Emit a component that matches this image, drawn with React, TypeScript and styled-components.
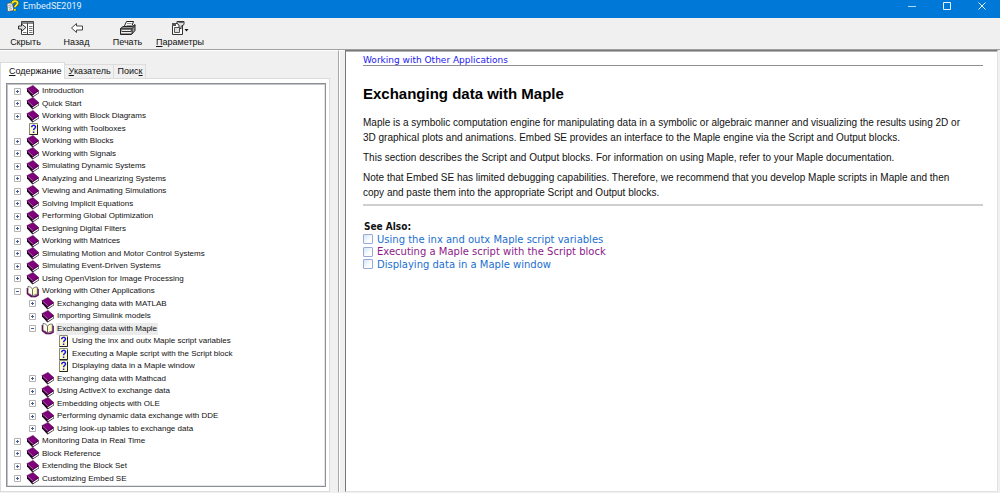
import React, { useState } from "react";
import styled, { createGlobalStyle } from "styled-components";

const GlobalStyle = createGlobalStyle`
  *, *::before, *::after { box-sizing: border-box; }
  body {
    margin: 0;
    background: #f0f0f0;
    color: #111;
    font-family: "Liberation Sans", Arial, sans-serif;
  }
  button { font: inherit; color: inherit; background: none; border: 0; padding: 0; }
  ul, h1, h2, p { margin: 0; padding: 0; }
  svg { display: block; }
`;

const Window = styled.div`
  display: flex;
  flex-direction: column;
  min-height: 100vh;
`;

const TitleBar = styled.header`
  display: flex;
  align-items: center;
  height: 18px;
  padding: 0 8px 6px 6px;
  background: #0078d7;
  color: #e6f2fc;
`;

const Title = styled.h1`
  flex: 1;
  margin-left: 4px;
  font: 400 9px/12px Roboto, sans-serif;
`;

const WindowControls = styled.div`
  display: flex;
  gap: 15px;
`;

const WindowButton = styled.button`
  display: flex;
  align-items: center;
  justify-content: center;
  width: 20px;
  height: 12px;
`;

const Toolbar = styled.div`
  display: flex;
  height: 32px;
  padding-top: 2px;
  border-bottom: 1px solid #a0a0a0;
  background: #f0f0f0;
`;

const ToolButton = styled.button<{ $wide?: boolean }>`
  display: flex;
  flex-direction: column;
  align-items: center;
  width: ${(p) => (p.$wide ? 54 : 51)}px;
  font-size: 9px;
  line-height: 11px;

  svg { margin-bottom: 1px; }
`;

const Workspace = styled.div`
  display: flex;
  flex: 1;
  padding: 0 2px 2px 0;
`;

const Sidebar = styled.aside`
  display: flex;
  flex-direction: column;
  flex: 0 0 339px;
  padding: 11px 8px 0 0;
  border-top: 1px solid #fff;
  border-right: 1px solid #a8a8a8;
`;

const TabList = styled.div`
  display: flex;
  align-items: flex-end;
  height: 16px;
`;

const Tab = styled.button<{ $active?: boolean }>`
  position: relative;
  height: ${(p) => (p.$active ? 17 : 14)}px;
  margin-bottom: ${(p) => (p.$active ? -1 : 0)}px;
  padding: 0 2px 1px ${(p) => (p.$active ? 8 : 4)}px;
  border: 1px solid #dcdcdc;
  border-bottom: 0;
  border-left-width: ${(p) => (p.$active ? 1 : 0)}px;
  background: ${(p) => (p.$active ? "#fff" : "#f0f0f0")};
  font-size: 9px;
  line-height: 12px;
  white-space: nowrap;
`;

const TabPanel = styled.div`
  display: flex;
  flex: 1;
  padding: 4px 3px 4px 5px;
  border: 1px solid #dcdcdc;
  background: #fff;
`;

const Tree = styled.ul`
  flex: 1;
  padding: 1px 6px;
  border: 1px solid #8b8f98;
  box-shadow: inset 1px 1px 0 #c4c4c4, inset -1px -1px 0 #e4e4e4;
  list-style: none;
`;

const TreeRow = styled.li<{ $depth: number }>`
  display: flex;
  align-items: center;
  height: 12px;
  padding-left: ${(p) => p.$depth * 15}px;

  &:nth-child(even) { height: 13px; }
`;

const Expander = styled.button`
  width: 9px;
  height: 9px;
  margin-right: 4px;
`;

const ExpanderSpace = styled.span`
  width: 13px;
`;

const TopicButton = styled.button<{ $selected?: boolean }>`
  height: 12px;
  margin-left: 1px;
  padding: 0 1px;
  background: ${(p) => (p.$selected ? "#ececec" : "transparent")};
  font-size: 8px;
  line-height: 12px;
  white-space: nowrap;
`;

const Splitter = styled.div`
  flex: 0 0 6px;
  border-top: 1px solid #fff;
  border-left: 1px solid #fff;
`;

const Page = styled.main`
  flex: 1;
  min-width: 0;
  padding: 3px 14px 12px 17px;
  border: 1px solid #e2e2e2;
  border-top-color: #777;
  border-left: 1px solid #777;
  box-shadow: inset 0 1px 0 #b4b4b4;
  background: #fff;
`;

const Breadcrumb = styled.nav`
  height: 12px;
  border-bottom: 1px solid #8f8f8f;
  font: 9px/13px "DejaVu Sans", Verdana, sans-serif;

  a { color: #2418f0; text-decoration: none; }
`;

const Heading = styled.h2`
  margin: 19px 0 12px;
  font-size: 15px;
  line-height: 18px;
  color: #000;
`;

const Article = styled.div`
  display: flex;
  flex-direction: column;
  gap: 5px;
  padding-right: 16px;
`;

const Paragraph = styled.p`
  font-size: 10px;
  line-height: 15px;
`;

const Rule = styled.hr`
  height: 2px;
  margin: 4px 0 14px;
  border: 0;
  background: #cfcfcf;
`;

const SeeAlso = styled.section`
  font: 10px/13px "DejaVu Sans", Verdana, sans-serif;
`;

const SeeAlsoTitle = styled.p`
  padding-left: 1px;
  font: 700 10px/13px "DejaVu Sans Condensed", Tahoma, sans-serif;
`;

const RelatedRow = styled.div`
  display: flex;
  align-items: center;
  gap: 4px;
  height: 12px;

  &:nth-of-type(even) { height: 13px; }
`;

const RelatedBox = styled.input`
  appearance: none;
  width: 10px;
  height: 10px;
  margin: 0;
  border: 1px solid #9aa9d6;
  border-radius: 1px;
  background: linear-gradient(135deg, #d3e6fa, #fff 70%);
`;

const RelatedLink = styled.a<{ $visited?: boolean }>`
  color: ${(p) => (p.$visited ? "#8b1a8b" : "#1a6fd0")};
  text-decoration: none;
`;

const AppIcon = () => (
  <svg width="13" height="12" viewBox="0 0 13 12" aria-hidden="true">
    <path d="M1 3.5 6 2.5 8 10.5 1.5 11.5z" fill="#f4f4ec" stroke="#4a5560" strokeWidth=".7" />
    <path d="M2.5 5.5l3-.5M2.5 7.3l3-.5M3 9.2l3-.5" stroke="#6c7780" strokeWidth=".7" />
    <path d="M6.3 3.6C6.2.8 11.6.4 11.6 3.2 11.6 5 9 5 9 7.2M8.8 9v1.8" fill="none" stroke="#3b3a10" strokeWidth="3" />
    <path d="M6.3 3.6C6.2.8 11.6.4 11.6 3.2 11.6 5 9 5 9 7.2M8.8 9v1.8" fill="none" stroke="#ffe81a" strokeWidth="2" />
  </svg>
);

const HideIcon = () => (
  <svg width="16" height="16" viewBox="0 0 16 16" aria-hidden="true">
    <path d="M3.500 1.500h12v13h-12z" fill="#fff" stroke="#444" />
    <path d="M4 2h11v2H4z" fill="#888" />
    <path d="M9.500 3v11" stroke="#444" />
    <path d="M11 6.500h3.500M11 8.500h3.500M11 10.500h3.500M11 12.500h3.500M5 12.500h3.500" stroke="#777" />
    <path d="M.5 6v3h3v2.300L8 7.500 3.500 4V6z" fill="#ddd" stroke="#222" strokeWidth=".9" />
  </svg>
);

const BackIcon = () => (
  <svg width="16" height="16" viewBox="0 0 16 16" aria-hidden="true">
    <path d="M2.500 8 7.500 3.500v2.500h6v4h-6v2.500z" fill="#fff" stroke="#333" strokeWidth=".9" />
  </svg>
);

const PrintIcon = () => (
  <svg width="18" height="16" viewBox="0 0 18 16" aria-hidden="true">
    <path d="M5 7 7.500 1.500h7L12.500 7z" fill="#fff" stroke="#222" />
    <path d="M8 3.500h4.500M7.500 5.500H12" stroke="#777" strokeWidth=".8" />
    <path d="M1.500 8.500 4 6.500h9.500l2.500-2v6l-3.500 4h-11z" fill="#999" stroke="#222" />
    <path d="M1.500 8.800h11.500l3-3.500M13 9v5" fill="none" stroke="#222" />
    <path d="M3 10.500h8.500M2 12.500h10.500" stroke="#eee" />
    <path d="M3 11.500h9" stroke="#333" />
  </svg>
);

const OptionsIcon = () => (
  <svg width="18" height="16" viewBox="0 0 18 16" aria-hidden="true">
    <path d="M1.500 3.500h10v11h-10z" fill="#fff" stroke="#333" />
    <path d="M1 3h4v3H1z" fill="#555" />
    <path d="M3.500 7.500h5v5h-5z" fill="#ddd" stroke="#555" />
    <path d="M6 1.500h7v3L10 6.500V9L8 7.500V5L6 3.500z" fill="#ddd" stroke="#222" strokeWidth=".9" />
    <path d="M7.500 2.500h5" stroke="#666" />
    <path d="M13.500 9h4l-2 2.500z" fill="#111" />
  </svg>
);

const ClosedBook = () => (
  <svg width="14" height="13" viewBox="0 0 14 13" aria-hidden="true">
    <path d="M1 4v2.500l5.500 6 6.500-4.300-.6-2.700L7 2z" fill="#1a0a1a" />
    <path d="M6.600 10.200 12.200 6.500l.2 1.500-5.600 3.600z" fill="#fff" />
    <path d="M.8 3.700 7 .4l5.800 5.200-6.300 4.200z" fill="#80007c" stroke="#3c003c" strokeWidth=".5" />
    <path d="M2 4.500l4.800 4.300" stroke="#c58ac5" strokeWidth=".7" />
  </svg>
);

const OpenBook = () => (
  <svg width="14" height="13" viewBox="0 0 14 13" aria-hidden="true">
    <path d="M1 3v6l4 3h4.500l3-1.500V4l-1-.5v6.500L7 11.500z" fill="#7b0078" stroke="#4a0048" strokeWidth=".6" />
    <path d="M2 1.500c2 0 4 1 4.500 3v7C5.500 9.500 4 9 2 8.500z" fill="#fffff0" stroke="#444" strokeWidth=".7" />
    <path d="M6.500 4.500C7 3 8.500 2 11.300 2v7.300C9 9.300 7.500 10 6.500 11.500z" fill="#fffbc8" stroke="#444" strokeWidth=".7" />
  </svg>
);

const TopicIcon = () => (
  <svg width="14" height="12" viewBox="0 0 14 12" aria-hidden="true">
    <path d="M3.500.5h8v11h-8z" fill="#fffbc4" stroke="#8a8a7a" />
    <path d="M11.500 2v9.500h-8" fill="none" stroke="#222" />
    <path d="M5.700 4.200c0-2.400 3.800-2.400 3.800-.2 0 1.500-1.900 1.500-1.900 3.200M7.600 8.400V10" fill="none" stroke="#1414e6" strokeWidth="1.500" />
  </svg>
);

const ExpanderIcon = ({ open }: { open?: boolean }) => (
  <svg width="9" height="9" viewBox="0 0 9 9" aria-hidden="true">
    <path d="M1.500 1.500h6v6h-6z" fill="#fff" stroke="#b4b4b4" />
    <path d={open ? "M3 4.500h3" : "M3 4.500h3M4.500 3v3"} stroke="#4a5a92" />
  </svg>
);

type Kind = "book" | "open" | "topic";
const topics: [string, number, Kind][] = [
  ["Introduction", 0, "book"],
  ["Quick Start", 0, "book"],
  ["Working with Block Diagrams", 0, "book"],
  ["Working with Toolboxes", 0, "topic"],
  ["Working with Blocks", 0, "book"],
  ["Working with Signals", 0, "book"],
  ["Simulating Dynamic Systems", 0, "book"],
  ["Analyzing and Linearizing Systems", 0, "book"],
  ["Viewing and Animating Simulations", 0, "book"],
  ["Solving Implicit Equations", 0, "book"],
  ["Performing Global Optimization", 0, "book"],
  ["Designing Digital Filters", 0, "book"],
  ["Working with Matrices", 0, "book"],
  ["Simulating Motion and Motor Control Systems", 0, "book"],
  ["Simulating Event-Driven Systems", 0, "book"],
  ["Using OpenVision for Image Processing", 0, "book"],
  ["Working with Other Applications", 0, "open"],
  ["Exchanging data with MATLAB", 1, "book"],
  ["Importing Simulink models", 1, "book"],
  ["Exchanging data with Maple", 1, "open"],
  ["Using the inx and outx Maple script variables", 2, "topic"],
  ["Executing a Maple script with the Script block", 2, "topic"],
  ["Displaying data in a Maple window", 2, "topic"],
  ["Exchanging data with Mathcad", 1, "book"],
  ["Using ActiveX to exchange data", 1, "book"],
  ["Embedding objects with OLE", 1, "book"],
  ["Performing dynamic data exchange with DDE", 1, "book"],
  ["Using look-up tables to exchange data", 1, "book"],
  ["Monitoring Data in Real Time", 0, "book"],
  ["Block Reference", 0, "book"],
  ["Extending the Block Set", 0, "book"],
  ["Customizing Embed SE", 0, "book"],
];

const icons = { book: ClosedBook, open: OpenBook, topic: TopicIcon };

const related = [
  { id: "variables", text: "Using the inx and outx Maple script variables" },
  { id: "script", text: "Executing a Maple script with the Script block", visited: true },
  { id: "window", text: "Displaying data in a Maple window" },
];

export default function App() {
  const [selected, setSelected] = useState("Exchanging data with Maple");

  return (
    <Window>
      <GlobalStyle />
      <TitleBar>
        <AppIcon />
        <Title>EmbedSE2019</Title>
        <WindowControls>
          <WindowButton aria-label="Minimize">
            <svg width="8" height="8" viewBox="0 0 8 8"><path d="M0 4.500h8" stroke="#b5d8f5" /></svg>
          </WindowButton>
          <WindowButton aria-label="Maximize">
            <svg width="8" height="8" viewBox="0 0 8 8"><path d="M.5.5h7v7h-7z" fill="none" stroke="#e8f3fc" /></svg>
          </WindowButton>
          <WindowButton aria-label="Close">
            <svg width="8" height="8" viewBox="0 0 8 8"><path d="M.5.500l7 7m0-7l-7 7" stroke="#e8f3fc" /></svg>
          </WindowButton>
        </WindowControls>
      </TitleBar>

      <Toolbar role="toolbar">
        <ToolButton><HideIcon /><span>Скрыть</span></ToolButton>
        <ToolButton><BackIcon /><span>Назад</span></ToolButton>
        <ToolButton><PrintIcon /><span>Печать</span></ToolButton>
        <ToolButton $wide><OptionsIcon /><span><u>П</u>араметры</span></ToolButton>
      </Toolbar>

      <Workspace>
        <Sidebar>
          <TabList role="tablist">
            <Tab $active role="tab" aria-selected="true"><u>С</u>одержание</Tab>
            <Tab role="tab" aria-selected="false"><u>У</u>казатель</Tab>
            <Tab role="tab" aria-selected="false">Поис<u>к</u></Tab>
          </TabList>
          <TabPanel role="tabpanel">
            <Tree role="tree">
              {topics.map(([name, depth, kind]) => {
                const Icon = icons[kind];
                return (
                  <TreeRow key={name} $depth={depth} role="treeitem" aria-level={depth + 1}>
                    {kind === "topic" ? (
                      <ExpanderSpace />
                    ) : (
                      <Expander aria-label={kind === "open" ? "Collapse" : "Expand"}>
                        <ExpanderIcon open={kind === "open"} />
                      </Expander>
                    )}
                    <Icon />
                    <TopicButton $selected={name === selected} onClick={() => setSelected(name)}>
                      {name}
                    </TopicButton>
                  </TreeRow>
                );
              })}
            </Tree>
          </TabPanel>
        </Sidebar>
        <Splitter />
        <Page>
          <Breadcrumb><a href="#applications">Working with Other Applications</a></Breadcrumb>
          <Heading>Exchanging data with Maple</Heading>
          <Article>
            <Paragraph>
              Maple is a symbolic computation engine for manipulating data in a symbolic or algebraic manner and
              visualizing the results using 2D or 3D graphical plots and animations. Embed SE provides an interface to
              the Maple engine via the Script and Output blocks.
            </Paragraph>
            <Paragraph>
              This section describes the Script and Output blocks. For information on using Maple, refer to your Maple
              documentation.
            </Paragraph>
            <Paragraph>
              Note that Embed SE has limited debugging capabilities. Therefore, we recommend that you develop Maple
              scripts in Maple and then copy and paste them into the appropriate Script and Output blocks.
            </Paragraph>
          </Article>
          <Rule />
          <SeeAlso>
            <SeeAlsoTitle>See Also:</SeeAlsoTitle>
            {related.map((r) => (
              <RelatedRow key={r.id}>
                <RelatedBox type="checkbox" aria-labelledby={r.id} />
                <RelatedLink id={r.id} href={"#" + r.id} $visited={r.visited}>{r.text}</RelatedLink>
              </RelatedRow>
            ))}
          </SeeAlso>
        </Page>
      </Workspace>
    </Window>
  );
}
